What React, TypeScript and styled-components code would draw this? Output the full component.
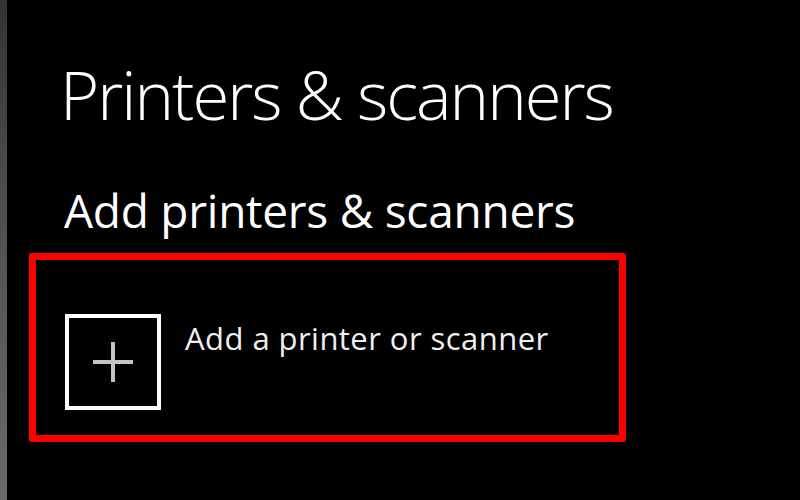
import React from "react";
import styled, { createGlobalStyle } from "styled-components";

const Global = createGlobalStyle`
  html, body { margin: 0; padding: 0; background: #000; }
  body { font-family: "Open Sans", "Noto Sans", sans-serif; }
`;

const Page = styled.div`
  display: flex;
  width: 800px;
  height: 500px;
  background: #000;
  overflow: hidden;
`;

const Edge = styled.div`
  width: 7px;
  flex: none;
  background: linear-gradient(to bottom, #333 0%, #4e4e4e 40%, #6a6a6a 100%);
`;

const Content = styled.main`
  display: flex;
  flex-direction: column;
  padding: 61px 0 0 22px;
`;

const Title = styled.h1`
  margin: 0 0 0 31px;
  font-size: 67px;
  line-height: 67px;
  font-weight: 300;
  letter-spacing: -2px;
  color: #fff;
  white-space: nowrap;
`;

const Subtitle = styled.h2`
  margin: 59px 0 0 35px;
  font-size: 46px;
  line-height: 46px;
  font-weight: 400;
  letter-spacing: -0.25px;
  color: #fff;
  white-space: nowrap;
`;

const Highlight = styled.div`
  margin-top: 20px;
  width: 597px;
  height: 189px;
  box-sizing: border-box;
  border: 7px solid #f00;
  border-radius: 3px;
  padding: 54px 0 0 29px;
`;

const AddButton = styled.button`
  display: flex;
  align-items: flex-start;
  gap: 24px;
  background: none;
  border: 0;
  padding: 0;
  cursor: pointer;
`;

const IconBox = styled.span`
  width: 96px;
  height: 96px;
  box-sizing: border-box;
  border: 4px solid #fff;
  display: flex;
  align-items: center;
  justify-content: center;
  flex: none;
`;

const Label = styled.span`
  margin-top: 9px;
  font-family: "Open Sans", "Noto Sans", sans-serif;
  font-size: 31px;
  line-height: 31px;
  letter-spacing: 0.45px;
  color: #f0f0f0;
  white-space: nowrap;
`;

const Plus = () => (
  <svg width="40" height="40" viewBox="0 0 40 40">
    <path d="M0 20H40M20 0V40" stroke="#c4c4c4" strokeWidth="4" />
  </svg>
);

export default function App() {
  return (
    <>
      <Global />
      <Page>
        <Edge />
        <Content>
          <Title>Printers &amp; scanners</Title>
          <Subtitle>Add printers &amp; scanners</Subtitle>
          <Highlight>
            <AddButton>
              <IconBox>
                <Plus />
              </IconBox>
              <Label>Add a printer or scanner</Label>
            </AddButton>
          </Highlight>
        </Content>
      </Page>
    </>
  );
}
